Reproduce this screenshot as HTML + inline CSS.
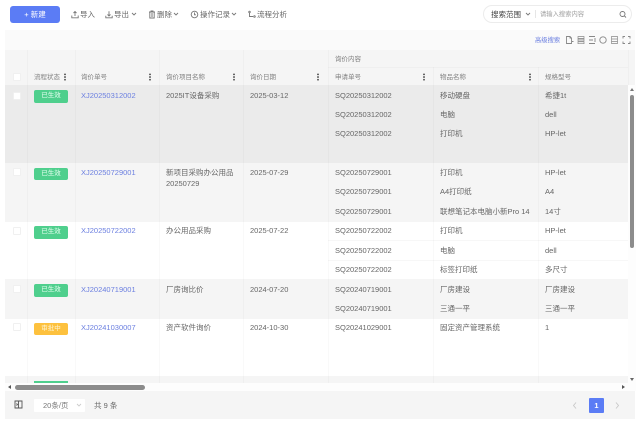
<!DOCTYPE html>
<html lang="zh"><head><meta charset="utf-8"><style>
*{box-sizing:border-box}
html,body{margin:0;padding:0;width:640px;height:426px;overflow:hidden;background:#fff}
body{position:relative;font-family:"Liberation Sans","Noto Sans CJK SC",sans-serif;font-size:7.5px;color:#666;filter:blur(.3px)}
div,span,svg{position:absolute}
.t{white-space:nowrap;line-height:10px;margin-top:.5px}
.b{background:#f5f5f5}
.v{width:1px;background:rgba(0,0,0,.022)}
.h{color:#808080;top:72px;font-size:6.5px}
.l{color:#6b7fe0}
.tag{left:34px;width:34px;height:12.500px;border-radius:2px;background:#4fcf8d;color:#e8fff2;text-align:center;line-height:12.500px;font-size:6.500px}
.cb{left:12.500px;width:8px;height:8px;border:1px solid #f0f0f0;background:#fff;border-radius:1px}
.m{width:2px;height:8px;top:73px;background:radial-gradient(circle,#555 .9px,transparent 1px) 0 0/2px 2.700px}
.tb{top:9px;color:#666;font-size:7.5px}
.ic{fill:none;stroke:#777;stroke-width:.9}
</style></head><body>
<div style="left:10px;top:6px;width:50px;height:17px;background:#5b7cf5;border-radius:3px;color:#fff;text-align:center;line-height:17px;font-size:7.5px">+ 新建</div>
<svg class="ic" style="left:71px;top:10px" width="8" height="9" viewBox="0 0 8 9"><path d="M4 6V1.500M2.500 3L4 1.500 5.500 3M.8 5.500V7.800H7.200V5.500"/></svg><span class="t tb" style="left:80px">导入</span>
<svg class="ic" style="left:105px;top:10px" width="8" height="9" viewBox="0 0 8 9"><path d="M4 1.200V6M2.500 4.500L4 6 5.500 4.500M.8 5.800V7.800H7.200V5.800"/></svg><span class="t tb" style="left:114px">导出</span>
<svg class="ic" style="left:131px;top:12px" width="6" height="5" viewBox="0 0 6 5"><path d="M1 1L3 3 5 1"/></svg>
<svg class="ic" style="left:147.500px;top:10px" width="8" height="9" viewBox="0 0 8 9"><path d="M1 2H7M3 2V1H5V2M1.800 2V8H6.200V2M3 4H5M3 6H5"/></svg><span class="t tb" style="left:157px">删除</span>
<svg class="ic" style="left:173px;top:12px" width="6" height="5" viewBox="0 0 6 5"><path d="M1 1L3 3 5 1"/></svg>
<svg class="ic" style="left:190px;top:10px" width="9" height="9" viewBox="0 0 9 9"><circle cx="4.500" cy="4.500" r="3.300"/><path d="M4.500 2.500V4.800H6"/></svg><span class="t tb" style="left:200px">操作记录</span>
<svg class="ic" style="left:231px;top:12px" width="6" height="5" viewBox="0 0 6 5"><path d="M1 1L3 3 5 1"/></svg>
<svg class="ic" style="left:248px;top:10px" width="8" height="9" viewBox="0 0 8 9"><circle cx="1.500" cy="2" r=".8"/><circle cx="6.500" cy="6.500" r=".8"/><path d="M1.500 3V6.500H5"/></svg><span class="t tb" style="left:257px">流程分析</span>

<div style="left:483px;top:5px;width:149px;height:18px;border:1px solid #ececec;border-radius:9px;background:#fff"></div>
<span class="t" style="left:491px;top:9px;font-size:7.5px;color:#444">搜索范围</span>
<svg class="ic" style="left:525px;top:12px" width="6" height="5" viewBox="0 0 6 5"><path d="M1 1L3 3 5 1"/></svg>
<div style="left:535px;top:10px;height:8px;width:1px;background:#e6e6e6"></div>
<span class="t" style="left:540px;top:9px;font-size:6.300px;color:#a0a0a0">请输入搜索内容</span>
<svg class="ic" style="left:619px;top:10px" width="8" height="9" viewBox="0 0 8 9"><circle cx="3.500" cy="4" r="2.500"/><path d="M5.500 6L7 7.500"/></svg>

<div style="left:5px;top:30px;width:630px;height:20px;background:#fafafa"></div>
<span class="t" style="left:535px;top:35px;font-size:6.300px;color:#6b7fe0">高级搜索</span>
<svg class="ic" style="left:565px;top:35px;stroke:#888" width="70" height="10" viewBox="0 0 70 10"><path d="M1.500 1.500H5L6.500 3V8.500H1.500ZM5 1.500V3H6.500M7 6.500H8.500"/><path d="M13 1.500H19V3.500H13ZM13 4.200H19V6H13ZM13 6.800H19V8.700H13Z" stroke-width=".7"/><path d="M24 1.500H30M24 5H28M24 8.500H30M30 3V7"/><circle cx="38" cy="5" r="3.200"/><path d="M46.500 1.500H52.500V8.500H46.500ZM46.500 4H52.500M46.500 6.500H52.500" stroke-width=".7"/><path d="M58 3.500V1.500H60M63 1.500H65V3.500M65 6.500V8.500H63M60 8.500H58V6.500"/></svg>

<div class="b" style="left:5px;top:50px;width:630px;height:35px"></div>
<div style="left:5px;top:85px;width:623px;height:78px;background:#ebebeb"></div>
<div class="b" style="left:5px;top:163px;width:623px;height:59px"></div>
<div class="b" style="left:5px;top:279px;width:623px;height:40px"></div>
<div class="b" style="left:5px;top:376px;width:630px;height:7px"></div>
<div style="left:328px;top:67px;width:300px;height:1px;background:#efefef"></div>
<div style="left:328px;top:240px;width:300px;height:1px;background:#f7f7f7"></div>
<div style="left:328px;top:260px;width:300px;height:1px;background:#f7f7f7"></div>
<div class="v" style="left:27px;top:50px;height:333px"></div>
<div class="v" style="left:75px;top:50px;height:333px"></div>
<div class="v" style="left:159px;top:50px;height:333px"></div>
<div class="v" style="left:243px;top:50px;height:333px"></div>
<div class="v" style="left:328px;top:50px;height:333px"></div>
<div class="v" style="left:433px;top:67px;height:316px"></div>
<div class="v" style="left:538px;top:67px;height:316px"></div>
<div class="v" style="left:628px;top:50px;height:333px"></div>

<span class="t" style="left:335px;top:54px;color:#808080;font-size:6.500px">询价内容</span>
<div class="cb" style="top:73px"></div>
<span class="t h" style="left:34px">流程状态</span><div class="m" style="left:64px"></div>
<span class="t h" style="left:81px">询价单号</span><div class="m" style="left:149px"></div>
<span class="t h" style="left:166px">询价项目名称</span><div class="m" style="left:233px"></div>
<span class="t h" style="left:250px">询价日期</span><div class="m" style="left:317px"></div>
<span class="t h" style="left:335px">申请单号</span><div class="m" style="left:423px"></div>
<span class="t h" style="left:440px">物品名称</span><div class="m" style="left:529px"></div>
<span class="t h" style="left:545px">规格型号</span>

<div class="cb" style="top:91.500px"></div><div class="tag" style="top:90px">已生效</div>
<span class="t l" style="left:81px;top:90px">XJ20250312002</span><span class="t" style="left:166px;top:90px">2025IT设备采购</span><span class="t" style="left:250px;top:90px">2025-03-12</span>
<span class="t" style="left:335px;top:90px">SQ20250312002</span><span class="t" style="left:440px;top:90px">移动硬盘</span><span class="t" style="left:545px;top:90px">希捷1t</span>
<span class="t" style="left:335px;top:109px">SQ20250312002</span><span class="t" style="left:440px;top:109px">电脑</span><span class="t" style="left:545px;top:109px">dell</span>
<span class="t" style="left:335px;top:128px">SQ20250312002</span><span class="t" style="left:440px;top:128px">打印机</span><span class="t" style="left:545px;top:128px">HP-let</span>

<div class="cb" style="top:168px"></div><div class="tag" style="top:167.500px">已生效</div>
<span class="t l" style="left:81px;top:167px">XJ20250729001</span><span class="t" style="left:166px;top:167px">新项目采购办公用品</span><span class="t" style="left:166px;top:178px">20250729</span><span class="t" style="left:250px;top:167px">2025-07-29</span>
<span class="t" style="left:335px;top:167px">SQ20250729001</span><span class="t" style="left:440px;top:167px">打印机</span><span class="t" style="left:545px;top:167px">HP-let</span>
<span class="t" style="left:335px;top:186px">SQ20250729001</span><span class="t" style="left:440px;top:186px">A4打印纸</span><span class="t" style="left:545px;top:186px">A4</span>
<span class="t" style="left:335px;top:206px">SQ20250729001</span><span class="t" style="left:440px;top:206px">联想笔记本电脑小新Pro 14</span><span class="t" style="left:545px;top:206px">14寸</span>

<div class="cb" style="top:227px"></div><div class="tag" style="top:226px">已生效</div>
<span class="t l" style="left:81px;top:225px">XJ20250722002</span><span class="t" style="left:166px;top:225px">办公用品采购</span><span class="t" style="left:250px;top:225px">2025-07-22</span>
<span class="t" style="left:335px;top:225px">SQ20250722002</span><span class="t" style="left:440px;top:225px">打印机</span><span class="t" style="left:545px;top:225px">HP-let</span>
<span class="t" style="left:335px;top:245px">SQ20250722002</span><span class="t" style="left:440px;top:245px">电脑</span><span class="t" style="left:545px;top:245px">dell</span>
<span class="t" style="left:335px;top:264px">SQ20250722002</span><span class="t" style="left:440px;top:264px">标签打印纸</span><span class="t" style="left:545px;top:264px">多尺寸</span>

<div class="cb" style="top:285px"></div><div class="tag" style="top:284px">已生效</div>
<span class="t l" style="left:81px;top:284px">XJ20240719001</span><span class="t" style="left:166px;top:284px">厂房询比价</span><span class="t" style="left:250px;top:284px">2024-07-20</span>
<span class="t" style="left:335px;top:284px">SQ20240719001</span><span class="t" style="left:440px;top:284px">厂房建设</span><span class="t" style="left:545px;top:284px">厂房建设</span>
<span class="t" style="left:335px;top:303px">SQ20240719001</span><span class="t" style="left:440px;top:303px">三通一平</span><span class="t" style="left:545px;top:303px">三通一平</span>

<div class="cb" style="top:323px"></div><div class="tag" style="top:322.500px;background:#fdc13e;color:#fff3d0">审批中</div>
<span class="t l" style="left:81px;top:322px">XJ20241030007</span><span class="t" style="left:166px;top:322px">资产软件询价</span><span class="t" style="left:250px;top:322px">2024-10-30</span>
<span class="t" style="left:335px;top:322px">SQ20241029001</span><span class="t" style="left:440px;top:322px">固定资产管理系统</span><span class="t" style="left:545px;top:322px">1</span>
<div style="left:34px;top:381px;width:34px;height:2px;background:#4fcf8d"></div>

<div style="left:628px;top:85px;width:8px;height:298px;background:#fdfdfd"></div>
<div style="left:629.500px;top:95px;width:4px;height:153px;background:#8c8c8c;border-radius:2px"></div>
<div style="left:629.500px;top:88px;width:0;height:0;border:2.500px solid transparent;border-top:0;border-bottom:3px solid #777"></div>
<div style="left:629.500px;top:378px;width:0;height:0;border:2.500px solid transparent;border-bottom:0;border-top:3px solid #666"></div>

<div style="left:5px;top:383px;width:631px;height:8px;background:#fdfdfd"></div>
<div style="left:15px;top:384.500px;width:130px;height:5px;background:#8c8c8c;border-radius:2.500px"></div>
<div style="left:8px;top:384.500px;width:0;height:0;border:2.500px solid transparent;border-left:0;border-right:3px solid #555"></div>
<div style="left:622px;top:384.500px;width:0;height:0;border:2.500px solid transparent;border-right:0;border-left:3px solid #555"></div>

<div class="b" style="left:5px;top:391px;width:630px;height:28px"></div>
<svg class="ic" style="left:14px;top:400px;stroke:#555" width="9" height="9" viewBox="0 0 9 9"><path d="M1 1H8V8H1ZM4.500 1V8M2.500 3.500L3.500 4.500 2.500 5.500"/></svg>
<div style="left:34px;top:399px;width:51px;height:13px;background:#fff;border-radius:1px"></div>
<span class="t" style="left:43px;top:400px;color:#777">20条/页</span>
<svg class="ic" style="left:76px;top:403px;stroke:#ccc" width="6" height="5" viewBox="0 0 6 5"><path d="M1 1L3 3 5 1"/></svg>
<span class="t" style="left:94px;top:400px;color:#666">共 9 条</span>
<svg class="ic" style="left:572px;top:401px;stroke:#c8c8c8" width="6" height="9" viewBox="0 0 6 9"><path d="M4 1.500L1.500 4.500 4 7.500"/></svg>
<div style="left:589px;top:398px;width:15px;height:15px;background:#5b7cf5;border-radius:1px;color:#fff;text-align:center;line-height:15px;font-weight:bold">1</div>
<svg class="ic" style="left:614px;top:401px;stroke:#c8c8c8" width="6" height="9" viewBox="0 0 6 9"><path d="M2 1.500L4.500 4.500 2 7.500"/></svg>
</body></html>
